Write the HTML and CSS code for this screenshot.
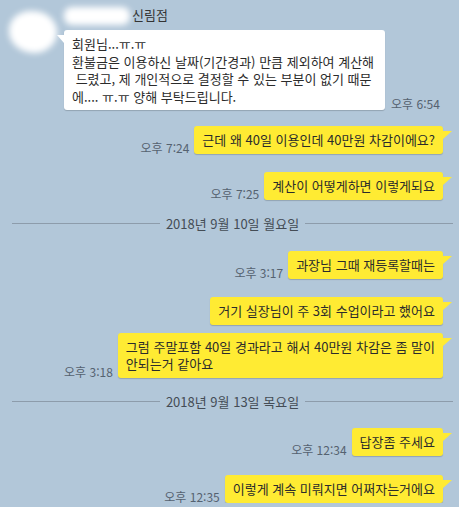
FILE: index.html
```html
<!DOCTYPE html>
<html lang="ko">

<head>
    <meta charset="UTF-8">
    <meta name="viewport" content="width=device-width, initial-scale=1.0">
    <title>채팅</title>
    <link rel="stylesheet" href="styles.css">
</head>

<body>
    <div class="chat">
        <!-- 받은 메시지 -->
        <div class="msg in">
            <div class="avatar"></div>
            <div class="body">
                <div class="name"><span class="blur-name"></span>신림점</div>
                <div class="line">
                    <div class="bubble white">회원님...ㅠ.ㅠ
환불금은 이용하신 날짜(기간경과) 만큼 제외하여 계산해
 드렸고, 제 개인적으로 결정할 수 있는 부분이 없기 때문
에.... ㅠ.ㅠ 양해 부탁드립니다.</div>
                    <span class="time">오후 6:54</span>
                </div>
            </div>
        </div>

        <!-- 보낸 메시지 -->
        <div class="msg out m16">
            <span class="time">오후 7:24</span>
            <div class="bubble yellow">근데 왜 40일 이용인데 40만원 차감이에요?</div>
        </div>
        <div class="msg out m18">
            <span class="time">오후 7:25</span>
            <div class="bubble yellow">계산이 어떻게하면 이렇게되요</div>
        </div>

        <div class="date"><span>2018년 9월 10일 월요일</span></div>

        <div class="msg out m19">
            <span class="time">오후 3:17</span>
            <div class="bubble yellow">과장님 그때 재등록할때는</div>
        </div>
        <div class="msg out m18">
            <div class="bubble yellow">거기 실장님이 주 3회 수업이라고 했어요</div>
        </div>
        <div class="msg out m8">
            <span class="time">오후 3:18</span>
            <div class="bubble yellow two">그럼 주말포함 40일 경과라고 해서 40만원 차감은 좀 말이
안되는거 같아요</div>
        </div>

        <div class="date"><span>2018년 9월 13일 목요일</span></div>

        <div class="msg out m18">
            <span class="time">오후 12:34</span>
            <div class="bubble yellow">답장좀 주세요</div>
        </div>
        <div class="msg out m19">
            <span class="time">오후 12:35</span>
            <div class="bubble yellow">이렇게 계속 미뤄지면 어쩌자는거에요</div>
        </div>
    </div>
</body>

</html>
```

FILE: styles.css
```css
* {
    margin: 0;
    padding: 0;
    box-sizing: border-box;
}

body {
    background-color: #b2c7d9;
    font-family: "Noto Sans CJK KR", "Noto Sans", sans-serif;
    font-size: 13px;
    color: #2b2b2b;
    overflow: hidden;
}

.chat {
    display: flex;
    flex-direction: column;
    padding-top: 7px;
}

/* 받은 메시지 */
.msg.in {
    display: flex;
    padding-left: 9px;
    gap: 7px;
}

.avatar {
    width: 48px;
    height: 42px;
    margin-top: 4px;
    background-color: #fff;
    border-radius: 45% 50% 48% 52%;
    filter: blur(3px);
}

.name {
    display: flex;
    align-items: center;
    height: 16px;
    line-height: 16px;
    color: #333;
}

.blur-name {
    width: 66px;
    height: 18px;
    margin-right: 2px;
    margin-top: 2px;
    background-color: #fff;
    border-radius: 8px;
    filter: blur(3px);
}

.line {
    display: flex;
    align-items: flex-end;
    gap: 6px;
    margin-top: 7px;
}

/* 보낸 메시지 */
.msg.out {
    display: flex;
    justify-content: flex-end;
    align-items: flex-end;
    gap: 5px;
    padding-right: 16px;
}

.m8 {
    margin-top: 8px;
}

.m16 {
    margin-top: 16px;
}

.m18 {
    margin-top: 18px;
}

.m19 {
    margin-top: 19px;
}

.bubble {
    position: relative;
    height: 28px;
    padding: 5px 8px;
    line-height: 17px;
    border-radius: 3px;
    white-space: pre;
    box-shadow: 0 1px 1px rgba(0, 0, 0, .18);
}

.bubble.two {
    height: 45px;
}

.bubble.white {
    height: 80px;
    background-color: #fff;
    padding: 5px 11px 5px 8px;
    line-height: 17.5px;
}

.bubble.yellow {
    background-color: #ffeb33;
}

/* 말풍선 꼬리 */
.bubble.yellow::after {
    content: "";
    position: absolute;
    top: 5px;
    right: -9px;
    border-top: 8px solid #ffeb33;
    border-right: 9px solid transparent;
}

.bubble.white::after {
    content: "";
    position: absolute;
    top: 5px;
    left: -7px;
    border-top: 8px solid #fff;
    border-left: 7px solid transparent;
}

.time {
    font-size: 12px;
    line-height: 13px;
    color: #556270;
    white-space: nowrap;
}

/* 날짜 구분선 */
.date {
    display: flex;
    align-items: center;
    gap: 6px;
    margin: 14px 6px 0 12px;
    height: 18px;
    color: #444c55;
}

.date::before,
.date::after {
    content: "";
    flex: 1;
    height: 1px;
    background-color: #8d9cab;
}
```
